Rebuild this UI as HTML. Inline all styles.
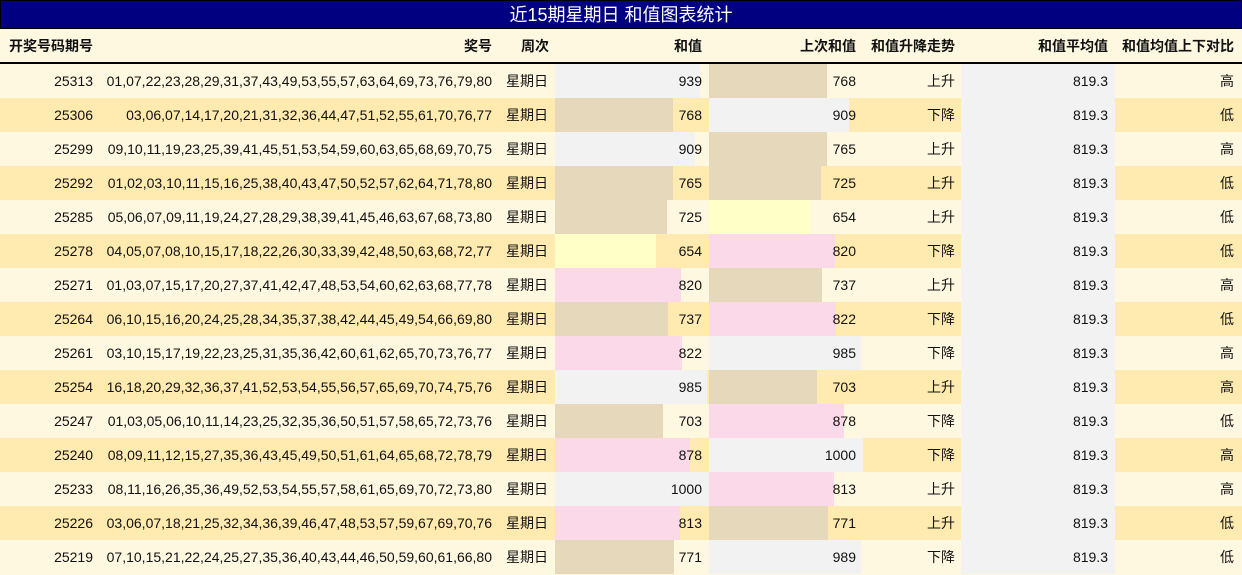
<!DOCTYPE html>
<html><head><meta charset="utf-8"><style>
*{margin:0;padding:0;box-sizing:border-box}
body{width:1242px;height:575px;background:#fff8e1;font-family:"Liberation Sans","Noto Sans CJK SC",sans-serif;font-size:14px;color:#111;overflow:hidden}
.t{height:29px;background:#000080;color:#fff;text-align:center;font-size:18px;line-height:29px;border:1px solid #000}
.r{position:absolute;left:0;width:1242px;height:34px;line-height:34px}
.c{position:absolute;top:0;height:34px;text-align:right;white-space:nowrap}
.h{font-weight:bold}
.b{position:absolute;top:0;height:34px}
</style></head><body>
<div class="t">近15期星期日 和值图表统计</div>
<div id="w"></div>
<script>
var d=[["25313","01,07,22,23,28,29,31,37,43,49,53,55,57,63,64,69,73,76,79,80",939,768,"上升","高"],
["25306","03,06,07,14,17,20,21,31,32,36,44,47,51,52,55,61,70,76,77",768,909,"下降","低"],
["25299","09,10,11,19,23,25,39,41,45,51,53,54,59,60,63,65,68,69,70,75",909,765,"上升","高"],
["25292","01,02,03,10,11,15,16,25,38,40,43,47,50,52,57,62,64,71,78,80",765,725,"上升","低"],
["25285","05,06,07,09,11,19,24,27,28,29,38,39,41,45,46,63,67,68,73,80",725,654,"上升","低"],
["25278","04,05,07,08,10,15,17,18,22,26,30,33,39,42,48,50,63,68,72,77",654,820,"下降","低"],
["25271","01,03,07,15,17,20,27,37,41,42,47,48,53,54,60,62,63,68,77,78",820,737,"上升","高"],
["25264","06,10,15,16,20,24,25,28,34,35,37,38,42,44,45,49,54,66,69,80",737,822,"下降","低"],
["25261","03,10,15,17,19,22,23,25,31,35,36,42,60,61,62,65,70,73,76,77",822,985,"下降","高"],
["25254","16,18,20,29,32,36,37,41,52,53,54,55,56,57,65,69,70,74,75,76",985,703,"上升","高"],
["25247","01,03,05,06,10,11,14,23,25,32,35,36,50,51,57,58,65,72,73,76",703,878,"下降","低"],
["25240","08,09,11,12,15,27,35,36,43,45,49,50,51,61,64,65,68,72,78,79",878,1000,"下降","高"],
["25233","08,11,16,26,35,36,49,52,53,54,55,57,58,61,65,69,70,72,73,80",1000,813,"上升","高"],
["25226","03,06,07,18,21,25,32,34,36,39,46,47,48,53,57,59,67,69,70,76",813,771,"上升","低"],
["25219","07,10,15,21,22,24,25,27,35,36,40,43,44,46,50,59,60,61,66,80",771,989,"下降","低"]];
function col(v){return v>=900?"#f2f2f2":v>=800?"#fbd9e8":v>=700?"#e6d8bb":"#ffffc8"}
var h='<div class="r h" style="top:29px;height:35px;border-bottom:2px solid #000">'+
'<div class="c" style="left:0;width:93px">开奖号码期号</div><div class="c" style="left:100px;width:392px">奖号</div>'+
'<div class="c" style="left:498px;width:51px">周次</div><div class="c" style="left:555px;width:147px">和值</div>'+
'<div class="c" style="left:709px;width:147px">上次和值</div><div class="c" style="left:863px;width:92px">和值升降走势</div>'+
'<div class="c" style="left:961px;width:147px">和值平均值</div><div class="c" style="left:1115px;width:119px">和值均值上下对比</div></div>';
d.forEach(function(x,i){var y=64+i*34,bg=i%2?"#ffeaaf":"#fff8e1";
h+='<div class="r" style="top:'+y+'px;background:'+bg+'">'+
'<div class="c" style="left:0;width:93px">'+x[0]+'</div><div class="c" style="left:100px;width:392px">'+x[1]+'</div>'+
'<div class="c" style="left:498px;width:50px">星期日</div>'+
'<div class="b" style="left:555px;width:'+(x[2]*0.154)+'px;background:'+col(x[2])+'"></div><div class="c" style="left:555px;width:147px">'+x[2]+'</div>'+
'<div class="b" style="left:709px;width:'+(x[3]*0.154)+'px;background:'+col(x[3])+'"></div><div class="c" style="left:709px;width:147px">'+x[3]+'</div>'+
'<div class="c" style="left:863px;width:92px">'+x[4]+'</div>'+
'<div class="b" style="left:961px;width:154px;background:#f2f2f2"></div><div class="c" style="left:961px;width:147px">819.3</div>'+
'<div class="c" style="left:1115px;width:119px">'+x[5]+'</div></div>';});
document.getElementById("w").innerHTML=h;
</script>
</body></html>
